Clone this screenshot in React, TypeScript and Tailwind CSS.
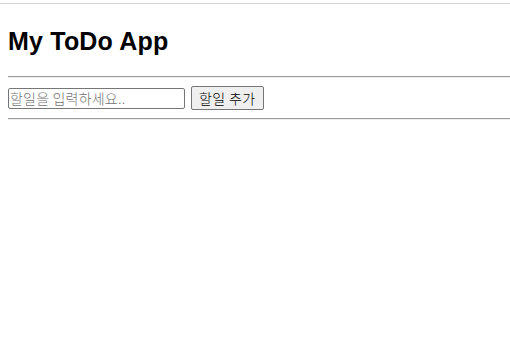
import React from "react";

const App = () => {
  return (
    <div className="min-h-[348px] w-[510px] bg-white font-['Liberation_Sans','Noto_Sans_CJK_KR',sans-serif] text-black">
      <div className="h-[3px]" />
      <div className="h-px bg-[#d3d3d3]" />
      <div className="px-2">
        <h2 className="mt-[23px] mb-[21px] text-[25px] font-bold leading-[28px] tracking-[0.2px]">My ToDo App</h2>
      </div>
      <div className="pl-2">
        <hr className="h-[2px] border-0 border-t border-t-[#9a9a9a] border-b border-b-[#eeeeee]" />
        <div className="flex items-center gap-[6px] py-[8px]">
          <input
            className="h-[21px] w-[177px] rounded-[2px] border border-[#767676] px-[1px] text-[14px] tracking-[0.2px] font-['Noto_Sans_CJK_KR',sans-serif] font-light placeholder:text-[#757575] outline-none"
            placeholder="할일을 입력하세요.."
          />
          <button className="h-[24px] rounded-[2px] border border-[#767676] bg-[#efefef] px-[7px] text-[14px] tracking-[0.4px] leading-none font-['Noto_Sans_CJK_KR',sans-serif] font-light text-black">
            할일 추가
          </button>
        </div>
        <hr className="h-[2px] border-0 border-t border-t-[#9a9a9a] border-b border-b-[#eeeeee]" />
      </div>
    </div>
  );
};

export default App;
